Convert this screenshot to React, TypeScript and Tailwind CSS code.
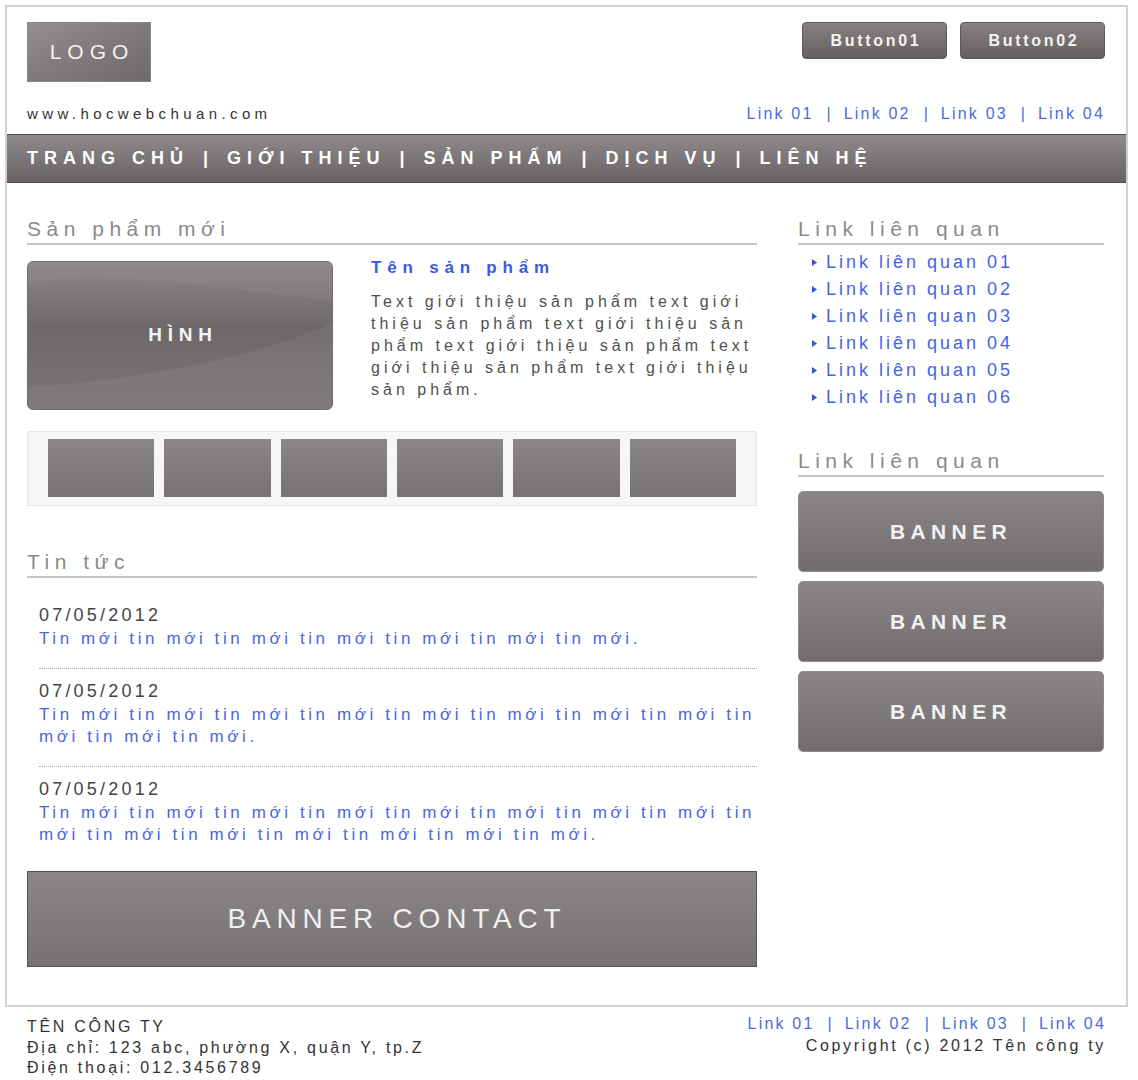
const NAV = ['TRANG CHỦ', 'GIỚI THIỆU', 'SẢN PHẨM', 'DỊCH VỤ', 'LIÊN HỆ']
const LINKS = ['Link 01', 'Link 02', 'Link 03', 'Link 04']
const RELATED = [1, 2, 3, 4, 5, 6].map((n) => `Link liên quan 0${n}`)

// "Tin mới tin mới ... tin mới." with n pairs
const tinMoi = (n: number) => 'Tin mới' + ' tin mới'.repeat(n - 1) + '.'
const NEWS = [tinMoi(7), tinMoi(11), tinMoi(15)]

const INTRO = 'Text giới thiệu sản phẩm ' + 'text giới thiệu sản phẩm '.repeat(4) + 'text giới thiệu sản phẩm.'

function TopLinks() {
  return (
    <div className="flex items-baseline gap-[13px] text-[16px] leading-[18px] text-[#4a6ce0]">
      {LINKS.map((l, i) => (
        <span key={l} className="flex items-baseline gap-[13px]">
          {i > 0 && <span>|</span>}
          <a className="tracking-[2.2px]">{l}</a>
        </span>
      ))}
    </div>
  )
}

function Heading({ children, className = '' }: { children: React.ReactNode; className?: string }) {
  return (
    <h2 className={`border-b-2 border-[#c4c4c4] pb-[2px] text-[21px] leading-[24px] tracking-[5.5px] text-[#8a8a8a] ${className}`}>
      {children}
    </h2>
  )
}

function Banner({ label }: { label: string }) {
  return (
    <div className="h-[81px] rounded-[5px] border border-[#8f8b8c] bg-linear-to-b from-[#8a8687] to-[#726c6d] flex items-center justify-center text-[21px] font-bold tracking-[5.4px] text-[#f2f2f2]">
      {label}
    </div>
  )
}

export default function App() {
  return (
    <div className="min-h-[1080px] bg-white pl-[5px] pt-[5px] font-['Liberation_Sans',Arial,sans-serif] text-[#333]">
      <div className="w-[1123px] border-2 border-[#d0d0d0]">
        {/* Header */}
        <div className="px-[20px] pr-[21px] pt-[15px]">
          <div className="flex items-start justify-between">
            <div className="w-[124px] h-[60px] border border-[#8a8586] bg-linear-to-br from-[#94908f] via-[#7f7a7b] to-[#6f696a] flex items-center justify-center pl-[6px] text-[21px] tracking-[6px] text-[#f2f2f2]">
              LOGO
            </div>
            <div className="flex gap-[13px]">
              {['Button01', 'Button02'].map((b) => (
                <button
                  key={b}
                  className="w-[145px] h-[37px] rounded-[4px] border border-[#5e5859] bg-linear-to-b from-[#868182] to-[#665f60] pl-[3px] text-[16px] font-bold tracking-[2.7px] text-[#f2f2f2]"
                >
                  {b}
                </button>
              ))}
            </div>
          </div>
          <div className="mt-[23px] mb-[11px] flex items-baseline justify-between">
            <span className="text-[15px] leading-[18px] tracking-[4.4px] text-[#333]">www.hocwebchuan.com</span>
            <TopLinks />
          </div>
        </div>

        {/* Nav */}
        <nav className="h-[49px] border-y border-[#4f4a4b] bg-linear-to-b from-[#8e8a8b] to-[#686263] flex items-center pl-[20px] text-[18px] font-bold tracking-[6px] text-white">
          {NAV.map((item, i) => (
            <span key={item} className="flex items-center">
              {i > 0 && <span className="ml-[14px] mr-[19px] tracking-normal">|</span>}
              <a>{item}</a>
            </span>
          ))}
        </nav>

        {/* Main */}
        <div className="flex gap-[41px] pl-[20px] pr-[21px] pt-[34px] pb-[38px]">
          <div className="w-[730px]">
            <Heading>Sản phẩm mới</Heading>
            <div className="mt-[16px] flex items-start gap-[38px]">
              <div className="relative w-[306px] h-[149px] shrink-0 overflow-hidden rounded-[6px] border border-[#6f6a6b] bg-linear-to-b from-[#8c8889] via-[#6d6869] via-45% to-[#7a7576] flex items-center justify-center">
                <svg className="absolute inset-0" width="306" height="149" viewBox="0 0 306 149">
                  <path d="M0 125 C110 118 230 95 306 60 L306 149 L0 149 Z" fill="#ffffff" fillOpacity="0.05" />
                  <path d="M0 20 C90 10 200 25 306 40 L306 0 L0 0 Z" fill="#ffffff" fillOpacity="0.04" />
                </svg>
                <span className="relative pl-[6px] text-[19px] font-bold tracking-[5.8px] text-[#f4f4f4]">HÌNH</span>
              </div>
              <div className="flex-1">
                <h3 className="text-[17px] font-bold leading-[14px] tracking-[5.8px] text-[#3a5ae0]">Tên sản phẩm</h3>
                <p className="mt-[16px] text-[16px] leading-[22px] tracking-[4px] text-[#505050]">{INTRO}</p>
              </div>
            </div>

            <div className="mt-[21px] grid grid-cols-6 gap-[10px] border border-[#e6e6e6] bg-[#f6f6f6] px-[20px] pt-[7px] pb-[8px]">
              {[0, 1, 2, 3, 4, 5].map((i) => (
                <div key={i} className="h-[58px] bg-linear-to-b from-[#8b8788] to-[#777273]" />
              ))}
            </div>

            <Heading className="mt-[44px]">Tin tức</Heading>
            <ul className="mt-[15px] pl-[12px]">
              {NEWS.map((n, i) => (
                <li key={i} className="pt-[12px] pb-[18px] border-b border-dotted border-[#a8a8a8] last:border-b-0">
                  <div className="text-[18px] leading-[20px] tracking-[3.2px] text-[#444]">07/05/2012</div>
                  <a className="mt-[3px] block text-[17px] leading-[22px] tracking-[3.6px] text-[#4a66e0]">{n}</a>
                </li>
              ))}
            </ul>

            <div className="mt-[7px] h-[96px] border border-[#555] bg-linear-to-b from-[#8b8788] to-[#767172] flex items-center justify-center pl-[10px] text-[28px] tracking-[5.8px] text-[#f0f0f0]">
              BANNER CONTACT
            </div>
          </div>

          <div className="w-[306px]">
            <Heading>Link liên quan</Heading>
            <ul className="mt-[4px] pl-[14px]">
              {RELATED.map((l) => (
                <li key={l} className="flex items-center gap-[9px] text-[18px] leading-[27px] tracking-[3px] text-[#4563e6]">
                  <svg width="5" height="7" viewBox="0 0 5 7" className="shrink-0">
                    <path d="M0 0 L5 3.5 L0 7 Z" fill="#3553d8" />
                  </svg>
                  <a>{l}</a>
                </li>
              ))}
            </ul>

            <Heading className="mt-[38px]">Link liên quan</Heading>
            <div className="mt-[14px] flex flex-col gap-[9px]">
              <Banner label="BANNER" />
              <Banner label="BANNER" />
              <Banner label="BANNER" />
            </div>
          </div>
        </div>
      </div>

      {/* Footer */}
      <footer className="w-[1123px] flex justify-between px-[22px] pt-[10px] text-[16px] leading-[20.5px] tracking-[2.7px] text-[#333]">
        <div>
          <div>TÊN CÔNG TY</div>
          <div>Địa chỉ: 123 abc, phường X, quận Y, tp.Z</div>
          <div>Điện thoại: 012.3456789</div>
        </div>
        <div className="-mt-[2px] flex flex-col items-end tracking-normal">
          <TopLinks />
          <div className="mt-[3px] tracking-[2.7px]">Copyright (c) 2012 Tên công ty</div>
        </div>
      </footer>
    </div>
  )
}
